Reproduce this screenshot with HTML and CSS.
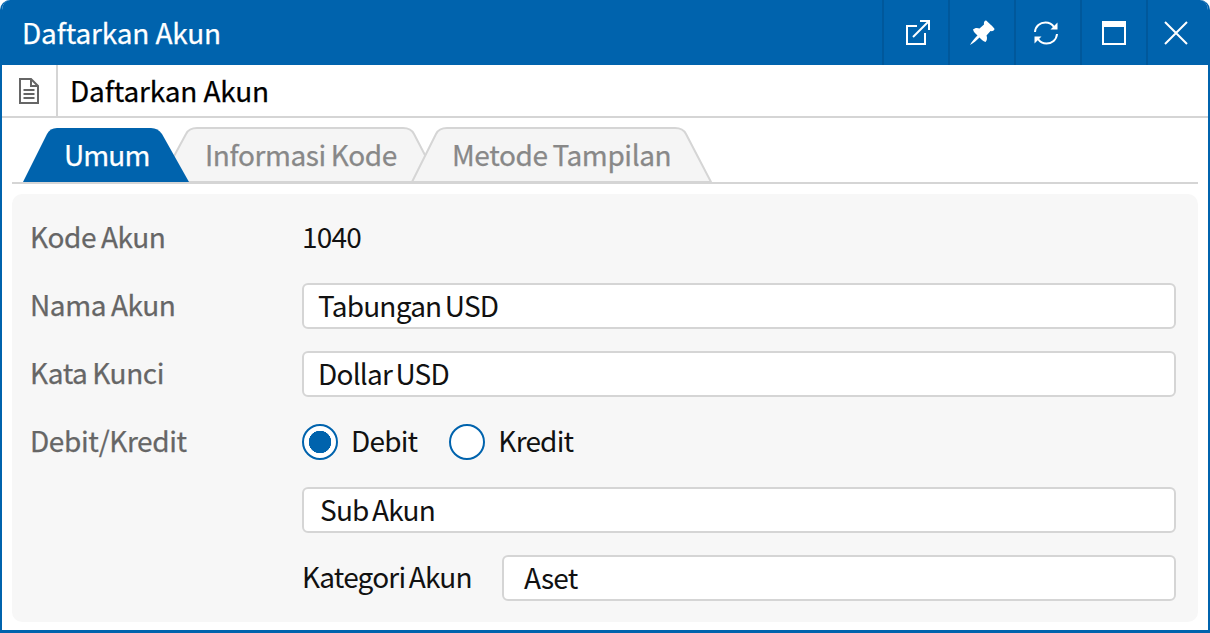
FILE: index.html
```html
<!DOCTYPE html>
<html lang="en">
  <head>
    <meta charset="UTF-8" />
    <meta name="viewport" content="width=device-width, initial-scale=1.0" />
    <title>Daftarkan Akun</title>
    <link rel="stylesheet" href="styles.css">
  </head>

  <body>
    <div class="window">
      <header class="title-bar">
        <div class="title-text">Daftarkan Akun</div>
        <div class="title-buttons">
          <button class="title-btn">
            <svg width="28" height="28" viewBox="-1 0 28 28" fill="none" stroke="#fff" stroke-width="2">
              <path d="M14 7H4v18h18V14" />
              <path d="M10 18 25 3" />
              <path d="M17 2h9v9" />
            </svg>
          </button>
          <button class="title-btn">
            <svg width="28" height="28" viewBox="0 0 28 28" fill="#fff">
              <path d="M18 1.500C18.500 1.500 26.500 9 26.500 10 26.500 11.500 24.500 12.500 22.500 12L18.500 16.500C19.500 19 19 21.500 17.500 23 15 22.500 13.500 20.500 11.500 18.500 9 21 5 24.500 2 26 3.500 23 7 19 9.500 16.500 7.500 14.500 5.500 13 5 10.500 6.500 9 9 8.500 11.500 9.500L16 5.500C15.500 3.500 16.500 1.500 18 1.500Z" />
            </svg>
          </button>
          <button class="title-btn">
            <svg width="28" height="28" viewBox="2 0 28 28" fill="none" stroke="#fff" stroke-width="2">
              <path d="M3 13C3.500 7 8 3.500 13.500 3.500 17 3.500 20 5 22 8" />
              <path d="M25 15C24.500 21 20 24.500 14.500 24.500 11 24.500 8 23 6 20" />
              <path d="M25.500 3.500V10.500H18.500Z" fill="#fff" stroke="none" />
              <path d="M2.500 24.500V17.500H9.500Z" fill="#fff" stroke="none" />
            </svg>
          </button>
          <button class="title-btn">
            <svg width="28" height="28" viewBox="0 0 28 28" fill="none" stroke="#fff">
              <rect x="3" y="3" width="22" height="22" stroke-width="2" />
              <path d="M2 5.500H26" stroke-width="5" />
            </svg>
          </button>
          <button class="title-btn last">
            <svg width="28" height="28" viewBox="0 0 28 28" fill="none" stroke="#fff" stroke-width="2">
              <path d="M3 3 25 25M25 3 3 25" />
            </svg>
          </button>
        </div>
      </header>

      <div class="sub-header">
        <div class="doc-icon">
          <svg width="22" height="28" viewBox="0 0 22 28" fill="none" stroke="#666" stroke-width="2">
            <path d="M2 2H13L20 9V26H2Z" />
            <path d="M13 2V9H20" />
            <path d="M5.500 13H16.500M5.500 17H16.500M5.500 21H16.500" />
          </svg>
        </div>
        <div class="sub-title">Daftarkan Akun</div>
      </div>

      <div class="tabs">
        <div class="tab tab-active">
          <svg class="tab-bg" viewBox="0 0 166 55" preserveAspectRatio="none">
            <path d="M0 55 24 7Q27 1 34 1H128Q135 1 139 7L166 55Z" fill="#0063ad" />
          </svg>
          <span class="tab-text">Umum</span>
        </div>
        <div class="tab tab-second">
          <svg class="tab-bg" viewBox="0 0 281 55" preserveAspectRatio="none">
            <path d="M1 55 27 7Q30 1 38 1H244Q252 1 255 7L280 55Z" fill="#f5f5f5" stroke="#d5d5d5" stroke-width="2" />
          </svg>
          <span class="tab-text">Informasi Kode</span>
        </div>
        <div class="tab tab-third">
          <svg class="tab-bg" viewBox="0 0 301 55" preserveAspectRatio="none">
            <path d="M1 55 25 7Q28 1 36 1H264Q272 1 275 7L300 55Z" fill="#f5f5f5" stroke="#d5d5d5" stroke-width="2" />
          </svg>
          <span class="tab-text">Metode Tampilan</span>
        </div>
      </div>

      <div class="panel">
        <div class="form-row">
          <label class="form-label">Kode Akun</label>
          <div class="form-value">1040</div>
        </div>
        <div class="form-row">
          <label class="form-label">Nama Akun</label>
          <div class="text-field">Tabungan USD</div>
        </div>
        <div class="form-row">
          <label class="form-label">Kata Kunci</label>
          <div class="text-field">Dollar USD</div>
        </div>
        <div class="form-row">
          <label class="form-label">Debit/Kredit</label>
          <div class="radio-group">
            <span class="radio radio-on"></span>
            <span class="radio-text">Debit</span>
            <span class="radio"></span>
            <span class="radio-text">Kredit</span>
          </div>
        </div>
        <div class="form-row">
          <label class="form-label"></label>
          <div class="text-field sub-field">Sub Akun</div>
        </div>
        <div class="form-row">
          <label class="form-label"></label>
          <div class="form-value kategori-label">Kategori Akun</div>
          <div class="text-field kategori-field">Aset</div>
        </div>
      </div>
    </div>
  </body>
</html>
```

FILE: styles.css
```css
* {
  box-sizing: border-box;
}

html,
body {
  margin: 0;
  padding: 0;
  background: #fff;
}

body {
  font-family: "Noto Sans CJK KR", "Noto Sans", sans-serif;
  font-size: 28px;
  letter-spacing: -0.8px;
  word-spacing: -2px;
  color: #111;
}

.window {
  width: 1210px;
  height: 633px;
  border-left: 2px solid #0063ad;
  border-right: 2px solid #0063ad;
  border-bottom: 3px solid #0063ad;
  border-radius: 10px 10px 0 0;
  overflow: hidden;
}

.title-bar {
  display: flex;
  justify-content: space-between;
  height: 65px;
  margin: 0 -2px;
  background: #0063ad;
  color: #fff;
}

.title-text {
  padding-left: 22px;
  -webkit-text-stroke: 0.25px #fff;
  letter-spacing: -0.15px;
  word-spacing: 0;
  line-height: 64px;
}

.title-buttons {
  display: flex;
}

.title-btn {
  display: flex;
  align-items: center;
  justify-content: center;
  width: 66px;
  padding: 0;
  background: none;
  border: none;
  border-left: 2px solid #00589b;
}

.title-btn.last {
  width: 64px;
  padding-right: 6px;
}

.sub-header {
  display: flex;
  height: 53px;
  border-bottom: 2px solid #d5d5d5;
}

.doc-icon {
  display: flex;
  align-items: center;
  justify-content: center;
  width: 56px;
  border-right: 2px solid #d5d5d5;
}

.sub-title {
  padding-left: 12px;
  -webkit-text-stroke: 0.25px #000;
  letter-spacing: -0.15px;
  word-spacing: 0;
  line-height: 50px;
  color: #000;
}

.tabs {
  display: flex;
  height: 66px;
  margin: 0 10px;
  padding: 9px 0 0 11px;
  border-bottom: 2px solid #d5d5d5;
}

.tab {
  position: relative;
  height: 55px;
  padding-left: 41px;
  letter-spacing: -0.4px;
  word-spacing: -1px;
  line-height: 55px;
  white-space: nowrap;
}

.tab-active {
  z-index: 2;
  width: 166px;
  letter-spacing: -0.9px;
}

.tab-second {
  width: 281px;
  margin-left: -30px;
  padding-left: 46px;
}

.tab-third {
  z-index: 1;
  width: 301px;
  margin-left: -29px;
}

.tab-bg {
  position: absolute;
  top: 0;
  left: 0;
  width: 100%;
  height: 100%;
}

.tab-text {
  position: relative;
  -webkit-text-stroke: 0.25px #888;
  color: #888;
}

.tab-active .tab-text {
  -webkit-text-stroke: 0.25px #fff;
  color: #fff;
}

.panel {
  height: 428px;
  margin: 10px 10px 0;
  padding: 21px 22px 0 19px;
  background: #f7f7f7;
  border-radius: 10px;
}

.form-row {
  display: flex;
  align-items: center;
  height: 46px;
  margin-bottom: 22px;
}

.form-label {
  flex: 0 0 272px;
  margin-left: -1px;
  padding-bottom: 4px;
  -webkit-text-stroke: 0.25px #666;
  letter-spacing: -0.4px;
  word-spacing: -1px;
  color: #666;
}

.text-field {
  flex: 1;
  height: 46px;
  padding-left: 14px;
  line-height: 41px;
  background: #fff;
  border: 2px solid #d5d5d5;
  border-radius: 6px;
}

.sub-field {
  padding-left: 16px;
}

.form-value {
  padding-bottom: 4px;
  color: #111;
}

.kategori-label {
  flex: 0 0 200px;
}

.kategori-field {
  padding-left: 20px;
}

.radio-group {
  display: flex;
  align-items: center;
}

.radio {
  width: 36px;
  height: 36px;
  background: #fff;
  border: 2px solid #0063ad;
  border-radius: 50%;
}

.radio-on {
  background: radial-gradient(circle, #0063ad 0 11px, #fff 11.5px);
}

.radio-text {
  margin: -4px 32px 0 13px;
}

.radio-text:last-child {
  margin-right: 0;
}
```
